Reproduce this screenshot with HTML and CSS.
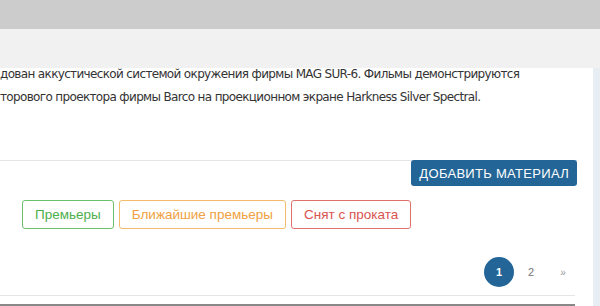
FILE: index.html
```html
<!DOCTYPE html>
<html lang="ru">
<head>
    <meta charset="UTF-8">
    <meta name="viewport" content="width=device-width, initial-scale=1.0">
    <link rel="stylesheet" href="styles.css">
    <title>Кинотеатр</title>
</head>
<body>
    <div class="topbar"></div>
    <div class="header"></div>
    <div class="main">
        <div class="content">
            <div class="article">
                <p>дован аккустической системой окружения фирмы MAG SUR-6. Фильмы демонстрируются</p>
                <p>торового проектора фирмы Barco на проекционном экране Harkness Silver Spectral.</p>
            </div>
            <div class="toolbar">
                <button class="btn-add">Добавить материал</button>
            </div>
            <div class="filters">
                <button class="filter filter-green">Премьеры</button>
                <button class="filter filter-orange">Ближайшие премьеры</button>
                <button class="filter filter-red">Снят с проката</button>
            </div>
            <div class="pager">
                <span class="page active">1</span>
                <span class="page">2</span>
                <span class="page next">»</span>
            </div>
            <div class="footer-line"></div>
        </div>
        <div class="sidebar"></div>
    </div>
</body>
</html>
```

FILE: styles.css
```css
body {
    margin: 0;
    font-family: "DejaVu Sans", sans-serif;
    font-size: 13px;
    color: #333;
    background: #fff;
    height: 306px;
    overflow: hidden;
}

.topbar {
    height: 29px;
    background-color: #cccccc;
}

.header {
    height: 39px;
    background-color: #f1f1f1;
}

.main {
    display: flex;
    height: 238px;
}

.content {
    width: 593px;
    overflow: hidden;
}

.sidebar {
    flex: 1;
    background-color: #e8edf3;
}

.article {
    margin-top: -5px;
    font-size: 12px;
    letter-spacing: -0.65px;
}

.article p {
    margin: 0;
    line-height: 23px;
    white-space: nowrap;
}

.toolbar {
    margin-top: 51px;
    border-top: 1px solid #e5e5e5;
    width: 577px;
    display: flex;
    justify-content: flex-end;
}

.btn-add {
    margin-top: -1px;
    height: 26px;
    padding: 0 8px;
    background-color: #236597;
    color: #fff;
    border: none;
    border-radius: 3px;
    font-family: "Liberation Sans", sans-serif;
    font-size: 13px;
    text-transform: uppercase;
    letter-spacing: 0.3px;
}

.filters {
    display: flex;
    gap: 5px;
    margin-top: 14px;
    padding-left: 22px;
}

.filter {
    height: 29px;
    padding: 0 12px;
    background: #fff;
    border: 1px solid;
    border-radius: 3px;
    font-family: "Liberation Sans", sans-serif;
    font-size: 13.5px;
}

.filter-green {
    color: #4cae4c;
    border-color: #6cc06c;
}

.filter-orange {
    color: #f0a040;
    border-color: #f3bb6a;
}

.filter-red {
    color: #d9534f;
    border-color: #e0706c;
}

.pager {
    display: flex;
    justify-content: flex-end;
    align-items: center;
    gap: 2px;
    margin-top: 28px;
    width: 578px;
}

.page {
    width: 30px;
    height: 30px;
    border-radius: 50%;
    display: flex;
    align-items: center;
    justify-content: center;
    font-family: "Liberation Sans", sans-serif;
    font-size: 11px;
    color: #777;
}

.page.active {
    background-color: #236597;
    color: #fff;
    font-weight: bold;
}

.page.next {
    font-size: 10px;
    color: #999;
}

.footer-line {
    margin-top: 8px;
    width: 575px;
    border-top: 1px solid #e5e5e5;
    height: 8px;
    border-bottom: 2px solid #888;
}
```
